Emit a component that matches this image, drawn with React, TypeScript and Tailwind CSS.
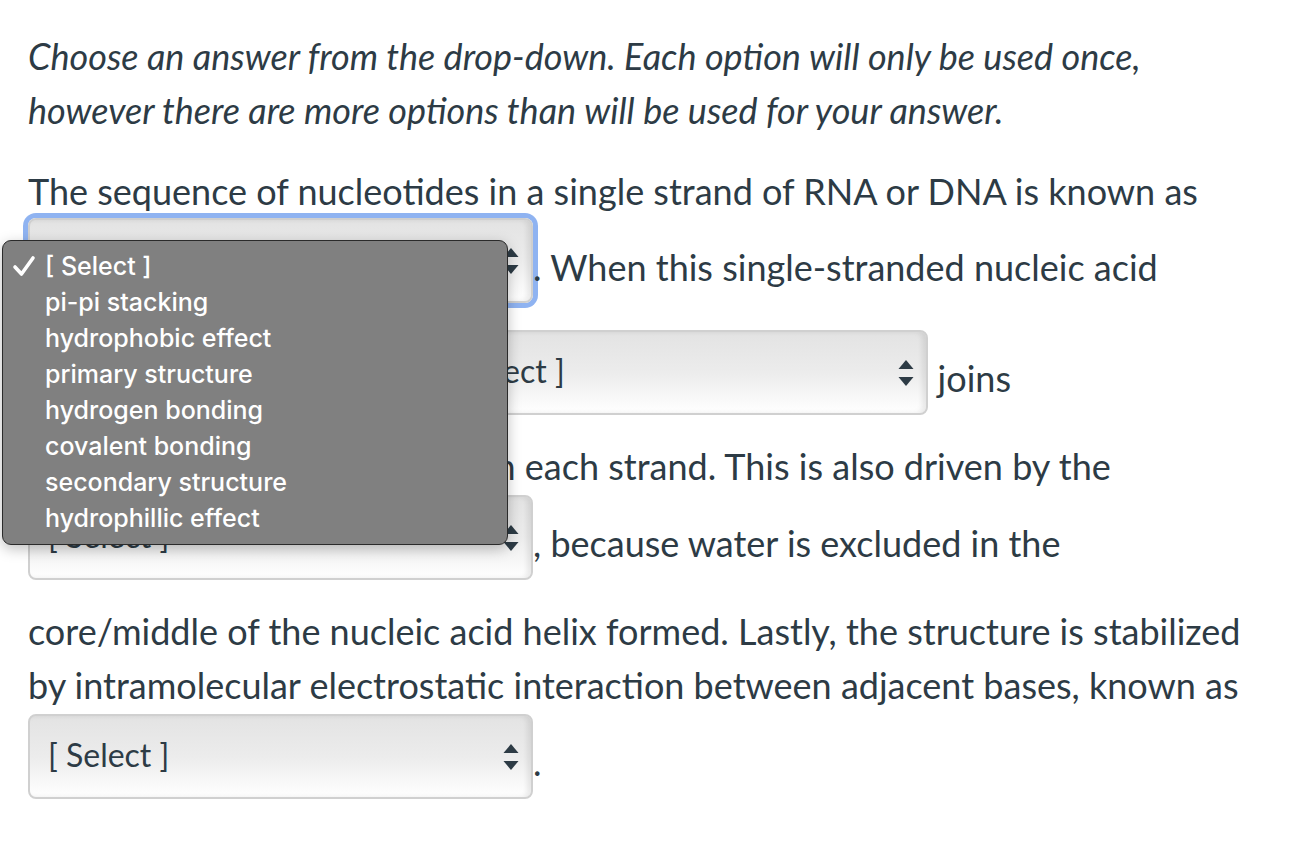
import React from "react";

function Arrows() {
  return (
    <svg width="16" height="30" viewBox="0 0 16 30" className="shrink-0">
      <polygon points="8,2 15.5,11 0.5,11" fill="#2d3b45" />
      <polygon points="0.5,19 15.5,19 8,28" fill="#2d3b45" />
    </svg>
  );
}

function Sel({ focus = false }: { focus?: boolean }) {
  if (focus) {
    return (
      <span className="mb-[25px] inline-flex h-[85px] w-[505px] items-center justify-between rounded-[8px] border-2 border-[#cfcfcf] bg-linear-to-b from-[#e3e3e3] via-[#ececec] to-white pl-[18px] pr-[12px] align-baseline shadow-[0_0_0_5px_#8fb3f1,inset_-4px_0_5px_rgba(0,0,0,0.08)]">
        <span className="relative -top-[10px] pt-[17px] text-[32px]">[ Select ]</span>
        <Arrows />
      </span>
    );
  }
  return (
    <span className="mb-[24px] mt-[2px] inline-flex h-[85px] w-[505px] items-center justify-between rounded-[8px] border-2 border-[#d0d0d0] bg-linear-to-b from-[#e3e3e3] via-[#ececec] to-white pl-[18px] pr-[12px] align-baseline shadow-[inset_-4px_0_5px_rgba(0,0,0,0.08)]">
      <span className="relative -top-[9px] pt-[14px] text-[32px]">[ Select ]</span>
      <Arrows />
    </span>
  );
}

const options = [
  "pi-pi stacking",
  "hydrophobic effect",
  "primary structure",
  "hydrogen bonding",
  "covalent bonding",
  "secondary structure",
  "hydrophillic effect",
];

export default function App() {
  return (
    <div className="relative min-h-[848px] w-full bg-white text-[#2d3b45]" style={{ fontFamily: "Lato, 'Noto Sans', sans-serif" }}>
      <div className="w-[1253px] pl-[28px] pt-[29px] text-[36px] leading-[54px]">
        <p className="mb-[27px] italic">
          Choose an answer from the drop-down. Each option will only be used once, however there are more options than will be used for your answer.
        </p>
        <p>
          The sequence of nucleotides in a single strand of RNA or DNA is known as <Sel focus />. When this single-stranded nucleic acid
          <br />
          interacts with the others <Sel /> joins
          <br />
          with a complementary basis on each strand. This is also driven by the <Sel />, because water is excluded in the
          <br />
          core/middle of the nucleic acid helix formed. Lastly, the structure is stabilized by intramolecular electrostatic interaction between adjacent bases, known as <Sel />.
        </p>
      </div>

      <div className="absolute left-[2px] top-[240px] h-[305px] w-[506px] rounded-[9px] border border-[#2b2b2b] bg-[#808080] pt-[7px] text-[25px] font-medium leading-[36px] text-white shadow-[0_4px_14px_rgba(0,0,0,0.25)]" style={{ fontFamily: "Inter, 'Liberation Sans', sans-serif" }}>
        <div className="flex items-center">
          <svg width="42" height="36" viewBox="0 0 42 36" className="shrink-0">
            <path d="M12 19 L18.5 26 L30 10" fill="none" stroke="white" strokeWidth="3.6" strokeLinecap="round" strokeLinejoin="round" />
          </svg>
          <span>[ Select ]</span>
        </div>
        {options.map((o) => (
          <div key={o} className="pl-[42px]">
            {o}
          </div>
        ))}
      </div>
    </div>
  );
}
